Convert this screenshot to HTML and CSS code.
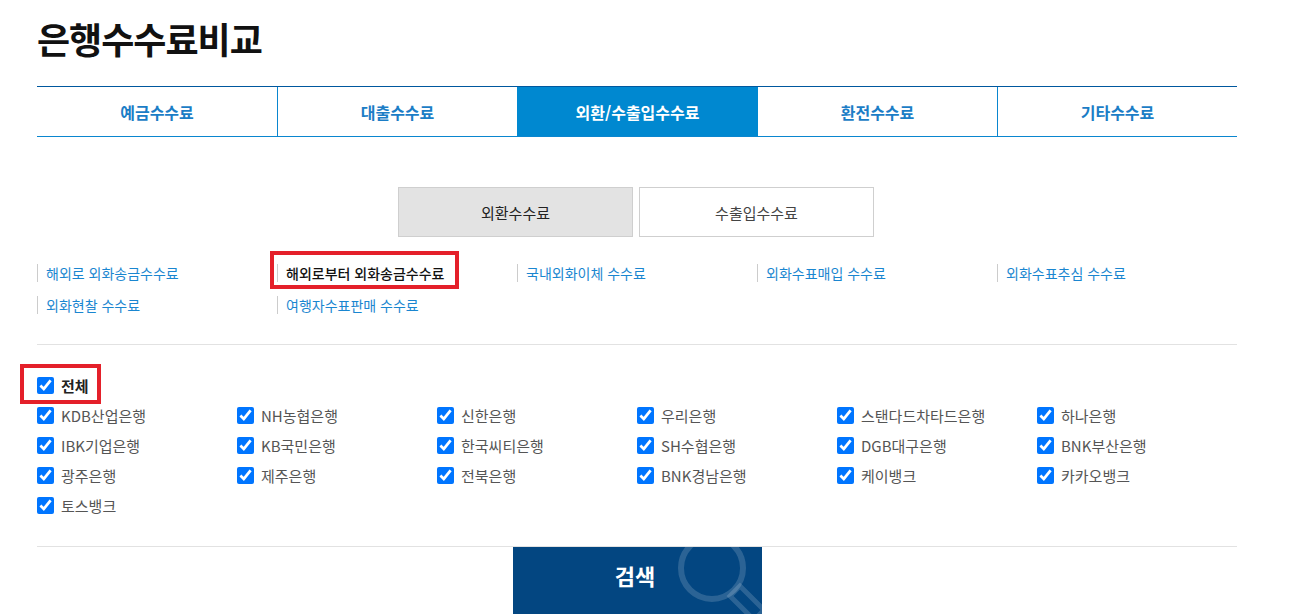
FILE: index.html
```html
<!DOCTYPE html>
<html lang="ko">
<head>
<meta charset="utf-8">
<title>은행수수료비교</title>
<link rel="stylesheet" href="styles.css">
</head>
<body>
<div class="wrap">
  <h1 class="title">은행수수료비교</h1>

  <ul class="tabs">
    <li class="tab">예금수수료</li>
    <li class="tab">대출수수료</li>
    <li class="tab active">외환/수출입수수료</li>
    <li class="tab">환전수수료</li>
    <li class="tab">기타수수료</li>
  </ul>

  <div class="subtabs">
    <div class="subtab active">외환수수료</div>
    <div class="subtab">수출입수수료</div>
  </div>

  <ul class="links">
    <li class="link"><span class="link-text">해외로 외화송금수수료</span></li>
    <li class="link selected"><span class="link-text">해외로부터 외화송금수수료</span></li>
    <li class="link"><span class="link-text">국내외화이체 수수료</span></li>
    <li class="link"><span class="link-text">외화수표매입 수수료</span></li>
    <li class="link"><span class="link-text">외화수표추심 수수료</span></li>
    <li class="link"><span class="link-text">외화현찰 수수료</span></li>
    <li class="link"><span class="link-text">여행자수표판매 수수료</span></li>
  </ul>

  <div class="divider"></div>

  <div class="banks">
    <label class="all"><input type="checkbox" checked><span>전체</span></label>
    <div class="bank-grid">
      <label class="bank"><input type="checkbox" checked><span>KDB산업은행</span></label>
      <label class="bank"><input type="checkbox" checked><span>NH농협은행</span></label>
      <label class="bank"><input type="checkbox" checked><span>신한은행</span></label>
      <label class="bank"><input type="checkbox" checked><span>우리은행</span></label>
      <label class="bank"><input type="checkbox" checked><span>스탠다드차타드은행</span></label>
      <label class="bank"><input type="checkbox" checked><span>하나은행</span></label>
      <label class="bank"><input type="checkbox" checked><span>IBK기업은행</span></label>
      <label class="bank"><input type="checkbox" checked><span>KB국민은행</span></label>
      <label class="bank"><input type="checkbox" checked><span>한국씨티은행</span></label>
      <label class="bank"><input type="checkbox" checked><span>SH수협은행</span></label>
      <label class="bank"><input type="checkbox" checked><span>DGB대구은행</span></label>
      <label class="bank"><input type="checkbox" checked><span>BNK부산은행</span></label>
      <label class="bank"><input type="checkbox" checked><span>광주은행</span></label>
      <label class="bank"><input type="checkbox" checked><span>제주은행</span></label>
      <label class="bank"><input type="checkbox" checked><span>전북은행</span></label>
      <label class="bank"><input type="checkbox" checked><span>BNK경남은행</span></label>
      <label class="bank"><input type="checkbox" checked><span>케이뱅크</span></label>
      <label class="bank"><input type="checkbox" checked><span>카카오뱅크</span></label>
      <label class="bank"><input type="checkbox" checked><span>토스뱅크</span></label>
    </div>
  </div>

  <div class="divider divider-bottom"></div>

  <div class="actions">
    <button class="search" type="button">
      <span class="search-label">검색</span>
      <svg class="search-icon" width="110" height="80" viewBox="0 0 110 80" aria-hidden="true">
        <circle cx="34" cy="21" r="31" fill="none" stroke="rgba(255,255,255,0.16)" stroke-width="6"/>
        <g transform="translate(57 44) rotate(-45)">
          <rect x="-7" y="0" width="14" height="34" fill="none" stroke="rgba(255,255,255,0.16)" stroke-width="5"/>
        </g>
      </svg>
    </button>
  </div>
</div>
</body>
</html>
```

FILE: styles.css
```css
*, *::before, *::after { box-sizing: border-box; }

body {
  margin: 0;
  background: #fff;
  font-family: "Noto Sans CJK KR", "Noto Sans", sans-serif;
  color: #222;
}

.wrap {
  width: 1200px;
  margin-left: 37px;
}

.title {
  margin: 0;
  padding-top: 14px;
  height: 86px;
  font-size: 36px;
  line-height: 48px;
  font-weight: 700;
  color: #111;
  letter-spacing: -1px;
}

.tabs {
  list-style: none;
  margin: 0;
  padding: 0;
  display: grid;
  grid-template-columns: repeat(5, 1fr);
  border-top: 1px solid #00589e;
  border-bottom: 1px solid #0a86cf;
}

.tab {
  height: 49px;
  display: flex;
  align-items: center;
  justify-content: center;
  font-size: 16px;
  font-weight: 700;
  color: #1b7dc6;
  border-left: 1px solid #0a86cf;
}

.tab:first-child { border-left: none; }

.tab.active {
  background: #0088d0;
  color: #fff;
  border-left-color: #0088d0;
}

.tab.active + .tab { border-left-color: #0088d0; }

.subtabs {
  display: flex;
  justify-content: center;
  gap: 6px;
  margin-top: 50px;
  padding-right: 2px;
}

.subtab {
  width: 235px;
  height: 50px;
  display: flex;
  align-items: center;
  justify-content: center;
  border: 1px solid #cfcfcf;
  font-size: 15px;
  color: #444;
  background: #fff;
}

.subtab.active {
  background: #e3e3e3;
  color: #222;
}

.links {
  list-style: none;
  margin: 0;
  padding: 27px 0 0;
  display: grid;
  grid-template-columns: repeat(5, 240px);
  row-gap: 14px;
}

.link {
  position: relative;
  height: 18px;
  display: flex;
  align-items: center;
  border-left: 1px solid #cccccc;
  padding-left: 8px;
  font-size: 14px;
  color: #1a86d0;
  white-space: nowrap;
}

.link.selected {
  color: #111;
  font-weight: 500;
}

.link.selected::after {
  content: "";
  position: absolute;
  left: -8px;
  top: -13px;
  width: 189px;
  height: 38px;
  border: 4px solid #e4202a;
}

.divider {
  height: 1px;
  background: #e2e2e2;
  margin-top: 30px;
}

.banks {
  padding-top: 25px;
}

.all,
.bank {
  display: flex;
  align-items: center;
  height: 30px;
  font-size: 15px;
  color: #555;
  cursor: pointer;
}

.all {
  position: relative;
  width: 60px;
  font-weight: 700;
  color: #222;
}

.all::after {
  content: "";
  position: absolute;
  left: -17px;
  top: -6px;
  width: 81px;
  height: 40px;
  border: 4px solid #e4202a;
}

.all input,
.bank input {
  width: 17px;
  height: 17px;
  margin: 0 7px 0 0;
  accent-color: #0075ff;
}

.bank-grid {
  display: grid;
  grid-template-columns: repeat(6, 200px);
}

.divider-bottom {
  margin-top: 26px;
}

.actions {
  display: flex;
  justify-content: center;
}

.search {
  position: relative;
  overflow: hidden;
  width: 249px;
  height: 67px;
  border: none;
  background: #034681;
  color: #fff;
  font-family: inherit;
  font-size: 22px;
  font-weight: 700;
  display: flex;
  align-items: flex-start;
  justify-content: center;
  padding-top: 12px;
  padding-left: 2px;
}

.search-label { position: relative; z-index: 1; }

.search-icon {
  position: absolute;
  left: 165px;
  top: 0;
}
```
